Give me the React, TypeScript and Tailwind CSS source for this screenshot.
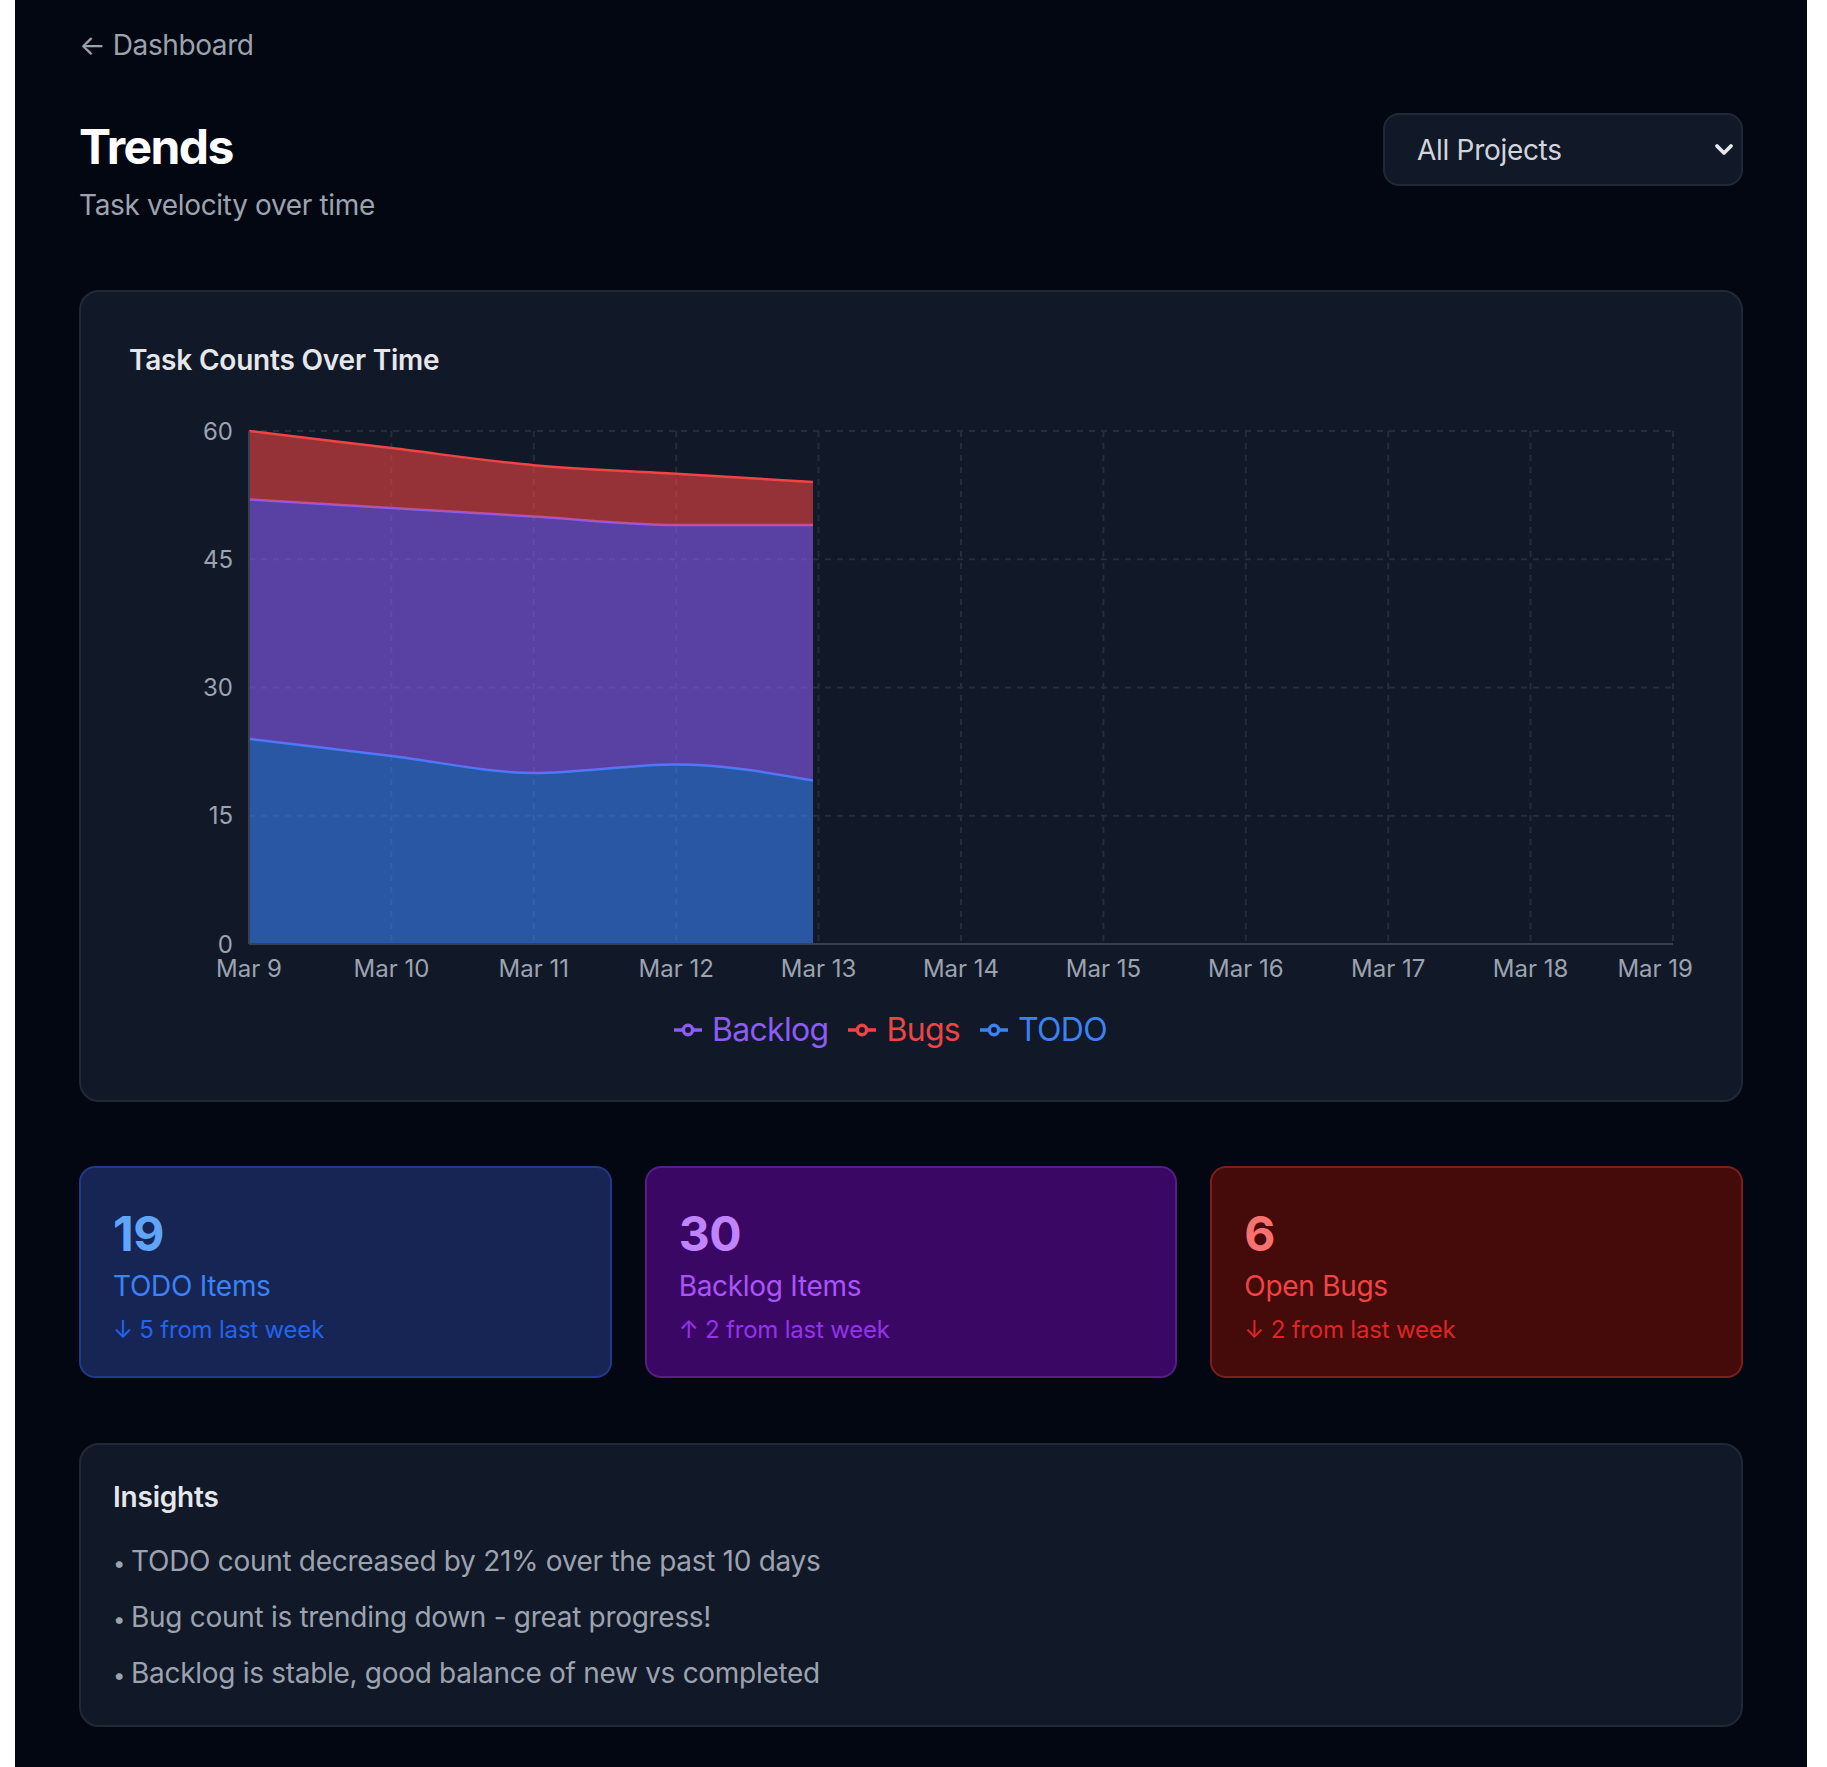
import React from "react";

type P = [number, number];

const data = [
  { todo: 24, backlog: 28, bugs: 8 },
  { todo: 22, backlog: 29, bugs: 7 },
  { todo: 20, backlog: 30, bugs: 6 },
  { todo: 21, backlog: 28, bugs: 6 },
  { todo: 19, backlog: 30, bugs: 5 },
];
const labels = [
  "Mar 9",
  "Mar 10",
  "Mar 11",
  "Mar 12",
  "Mar 13",
  "Mar 14",
  "Mar 15",
  "Mar 16",
  "Mar 17",
  "Mar 18",
  "Mar 19",
];

const W = 1564;
const H = 597;
const L = 120;
const R = 1544;
const T = 20;
const B = 533;
const step = (R - L) / 10;
const yOf = (v: number) => B - (v * (B - T)) / 60;

type Seg = { c1: P; c2: P; p0: P; p1: P };

function monotone(pts: P[]): Seg[] {
  const n = pts.length;
  const d: number[] = [];
  for (let i = 0; i < n - 1; i++) {
    d.push((pts[i + 1][1] - pts[i][1]) / (pts[i + 1][0] - pts[i][0]));
  }
  const t: number[] = new Array(n).fill(0);
  for (let i = 1; i < n - 1; i++) {
    const h0 = pts[i][0] - pts[i - 1][0];
    const h1 = pts[i + 1][0] - pts[i][0];
    const s0 = d[i - 1];
    const s1 = d[i];
    const p = (s0 * h1 + s1 * h0) / (h0 + h1);
    t[i] =
      (Math.sign(s0) + Math.sign(s1)) *
        Math.min(Math.abs(s0), Math.abs(s1), 0.5 * Math.abs(p)) || 0;
  }
  t[0] = (3 * d[0] - t[1]) / 2;
  t[n - 1] = (3 * d[n - 2] - t[n - 2]) / 2;
  const segs: Seg[] = [];
  for (let i = 0; i < n - 1; i++) {
    const [x0, y0] = pts[i];
    const [x1, y1] = pts[i + 1];
    const dx = (x1 - x0) / 3;
    segs.push({
      p0: [x0, y0],
      p1: [x1, y1],
      c1: [x0 + dx, y0 + dx * t[i]],
      c2: [x1 - dx, y1 - dx * t[i + 1]],
    });
  }
  return segs;
}

function linePath(pts: P[]) {
  const segs = monotone(pts);
  let s = `M${pts[0][0]},${pts[0][1]}`;
  for (const g of segs) {
    s += `C${g.c1[0]},${g.c1[1]},${g.c2[0]},${g.c2[1]},${g.p1[0]},${g.p1[1]}`;
  }
  return s;
}

function areaPath(top: P[], bottom: P[]) {
  let s = linePath(top);
  const segs = monotone(bottom);
  const last = bottom[bottom.length - 1];
  s += `L${last[0]},${last[1]}`;
  for (let i = segs.length - 1; i >= 0; i--) {
    const g = segs[i];
    s += `C${g.c2[0]},${g.c2[1]},${g.c1[0]},${g.c1[1]},${g.p0[0]},${g.p0[1]}`;
  }
  return s + "Z";
}

const xs = data.map((_, i) => L + i * step);
const todoTop: P[] = data.map((r, i) => [xs[i], yOf(r.todo)]);
const backTop: P[] = data.map((r, i) => [xs[i], yOf(r.todo + r.backlog)]);
const bugsTop: P[] = data.map((r, i) => [
  xs[i],
  yOf(r.todo + r.backlog + r.bugs),
]);
const zero: P[] = data.map((_, i) => [xs[i], B]);

function Chart() {
  const grid = "#252e3d";
  return (
    <svg width={W} height={H} viewBox={`0 0 ${W} ${H}`} className="block">
      <defs>
        <clipPath id="reveal">
          <rect x={L - 4} y={0} width={684 - L + 4} height={H} />
        </clipPath>
      </defs>
      {[60, 45, 30, 15].map((v) => (
        <line
          key={v}
          x1={L}
          x2={R}
          y1={yOf(v)}
          y2={yOf(v)}
          stroke={grid}
          strokeWidth={2}
          strokeDasharray="6 6"
        />
      ))}
      {labels.map((_, i) =>
        i === 0 ? null : (
          <line
            key={i}
            x1={L + i * step}
            x2={L + i * step}
            y1={T}
            y2={B}
            stroke={grid}
            strokeWidth={2}
            strokeDasharray="6 6"
          />
        )
      )}
      <g clipPath="url(#reveal)">
        <path d={areaPath(todoTop, zero)} fill="#3b82f6" fillOpacity={0.6} />
        <path d={linePath(todoTop)} fill="none" stroke="#3b82f6" strokeWidth={2.5} />
        <path d={areaPath(backTop, todoTop)} fill="#8b5cf6" fillOpacity={0.6} />
        <path d={linePath(backTop)} fill="none" stroke="#8b5cf6" strokeWidth={2.5} />
        <path d={areaPath(bugsTop, backTop)} fill="#ef4444" fillOpacity={0.6} />
        <path d={linePath(bugsTop)} fill="none" stroke="#ef4444" strokeWidth={2.5} />
      </g>
      <line x1={L} x2={L} y1={T} y2={B} stroke="#374151" strokeWidth={2} />
      <line x1={L} x2={R} y1={B} y2={B} stroke="#374151" strokeWidth={2} />
      {[60, 45, 30, 15, 0].map((v) => (
        <text
          key={v}
          x={104}
          y={yOf(v)}
          dy="0.36em"
          textAnchor="end"
          fontSize={24}
          fill="#9ca3af"
          fontFamily="Inter, sans-serif"
        >
          {v}
        </text>
      ))}
      {labels.map((lab, i) => {
        const last = i === labels.length - 1;
        return (
          <text
            key={lab}
            x={last ? W : L + i * step}
            y={557}
            dy="0.36em"
            textAnchor={last ? "end" : "middle"}
            fontSize={24}
            fill="#9ca3af"
            fontFamily="Inter, sans-serif"
          >
            {lab}
          </text>
        );
      })}
    </svg>
  );
}

function LegendIcon({ color }: { color: string }) {
  return (
    <svg width={28} height={28} viewBox="0 0 32 32" className="block">
      <path
        strokeWidth={4}
        fill="none"
        stroke={color}
        d="M0,16h10.666666666666666A5.333333333333333,5.333333333333333,0,1,1,21.333333333333332,16H32M21.333333333333332,16A5.333333333333333,5.333333333333333,0,1,1,10.666666666666666,16"
      />
    </svg>
  );
}

function Legend() {
  const items = [
    { name: "Backlog", color: "#8b5cf6", cls: "text-[#8b5cf6]" },
    { name: "Bugs", color: "#ef4444", cls: "text-[#ef4444]" },
    { name: "TODO", color: "#3b82f6", cls: "text-[#3b82f6]" },
  ];
  return (
    <div className="flex h-[44px] items-center justify-center pr-[41px]">
      {items.map((it) => (
        <div key={it.name} className="mr-[20px] flex items-center last:mr-0">
          <div className="mr-[10px]">
            <LegendIcon color={it.color} />
          </div>
          <span className={`text-[32px] leading-[42px] tracking-[-0.7px] ${it.cls}`}>
            {it.name}
          </span>
        </div>
      ))}
    </div>
  );
}

function StatCard({
  value,
  label,
  sub,
  box,
  valueCls,
  labelCls,
  subCls,
}: {
  value: string;
  label: string;
  sub: string;
  box: string;
  valueCls: string;
  labelCls: string;
  subCls: string;
}) {
  return (
    <div className={`rounded-[16px] border-2 px-[32px] pb-[30px] pt-[34px] ${box}`}>
      <div className={`text-[48px] font-bold leading-[64px] tracking-[-0.5px] ${valueCls}`}>
        {value}
      </div>
      <div className={`text-[28px] leading-[40px] tracking-[-0.3px] ${labelCls}`}>{label}</div>
      <div className={`mt-[8px] text-[24px] leading-[32px] tracking-[-0.2px] ${subCls}`}>{sub}</div>
    </div>
  );
}

function Bullet({ children }: { children: React.ReactNode }) {
  return (
    <li className="leading-[40px]">
      <span className="mr-[6px] text-[22px] leading-[0px]">•</span>
      {children}
    </li>
  );
}

export default function App() {
  return (
    <div className="min-h-[1767px] bg-white font-['Inter',sans-serif]">
      <div className="ml-[15px] min-h-[1767px] w-[1792px] bg-[#030712] px-[64px] pb-[43px] pt-[25px]">
        <a className="block text-[28px] leading-[40px] tracking-[-0.4px] text-[#9ca3af]">
          ← Dashboard
        </a>

        <div className="mt-[48px] flex items-start justify-between">
          <div className="pt-[2px]">
            <h1 className="text-[48px] font-bold leading-[64px] tracking-[-1.6px] text-white">
              Trends
            </h1>
            <p className="mt-[6px] text-[28px] leading-[40px] tracking-[-0.35px] text-[#9ca3af]">
              Task velocity over time
            </p>
          </div>
          <div className="flex h-[73px] w-[360px] items-center justify-between rounded-[16px] border-2 border-[#1f2937] bg-[#111827] pl-[32px] pr-[7px] text-[28px] tracking-[-0.3px] text-[#d1d5db]">
            <span>All Projects</span>
            <svg width={20} height={14} viewBox="0 0 20 14" className="block">
              <polyline
                points="3,3 10,10 17,3"
                fill="none"
                stroke="#e5e7eb"
                strokeWidth={3.8}
                strokeLinecap="round"
                strokeLinejoin="round"
              />
            </svg>
          </div>
        </div>

        <div className="mt-[65px] rounded-[20px] border-2 border-[#1f2937] bg-[#111827] p-[48px]">
          <h2 className="text-[28px] font-semibold leading-[40px] tracking-[-0.2px] text-[#e5e7eb]">
            Task Counts Over Time
          </h2>
          <div className="mt-[31px]">
            <Chart />
          </div>
          <Legend />
        </div>

        <div className="mt-[64px] grid grid-cols-3 gap-[33px]">
          <StatCard
            value="19"
            label="TODO Items"
            sub="↓ 5 from last week"
            box="bg-[#172554] border-[#1e3a8a]"
            valueCls="text-[#60a5fa]"
            labelCls="text-[#3b82f6]"
            subCls="text-[#2563eb]"
          />
          <StatCard
            value="30"
            label="Backlog Items"
            sub="↑ 2 from last week"
            box="bg-[#3b0764] border-[#581c87]"
            valueCls="text-[#c084fc]"
            labelCls="text-[#a855f7]"
            subCls="text-[#9333ea]"
          />
          <StatCard
            value="6"
            label="Open Bugs"
            sub="↓ 2 from last week"
            box="bg-[#450a0a] border-[#7f1d1d]"
            valueCls="text-[#f87171]"
            labelCls="text-[#ef4444]"
            subCls="text-[#dc2626]"
          />
        </div>

        <div className="mt-[65px] rounded-[20px] border-2 border-[#1f2937] bg-[#111827] p-[32px]">
          <h3 className="text-[28px] font-semibold leading-[40px] tracking-[-0.2px] text-[#e5e7eb]">
            Insights
          </h3>
          <ul className="mt-[24px] flex flex-col gap-[16px] text-[28px] leading-[40px] tracking-[-0.3px] text-[#9ca3af]">
            <Bullet>TODO count decreased by 21% over the past 10 days</Bullet>
            <Bullet>Bug count is trending down - great progress!</Bullet>
            <Bullet>Backlog is stable, good balance of new vs completed</Bullet>
          </ul>
        </div>
      </div>
    </div>
  );
}
